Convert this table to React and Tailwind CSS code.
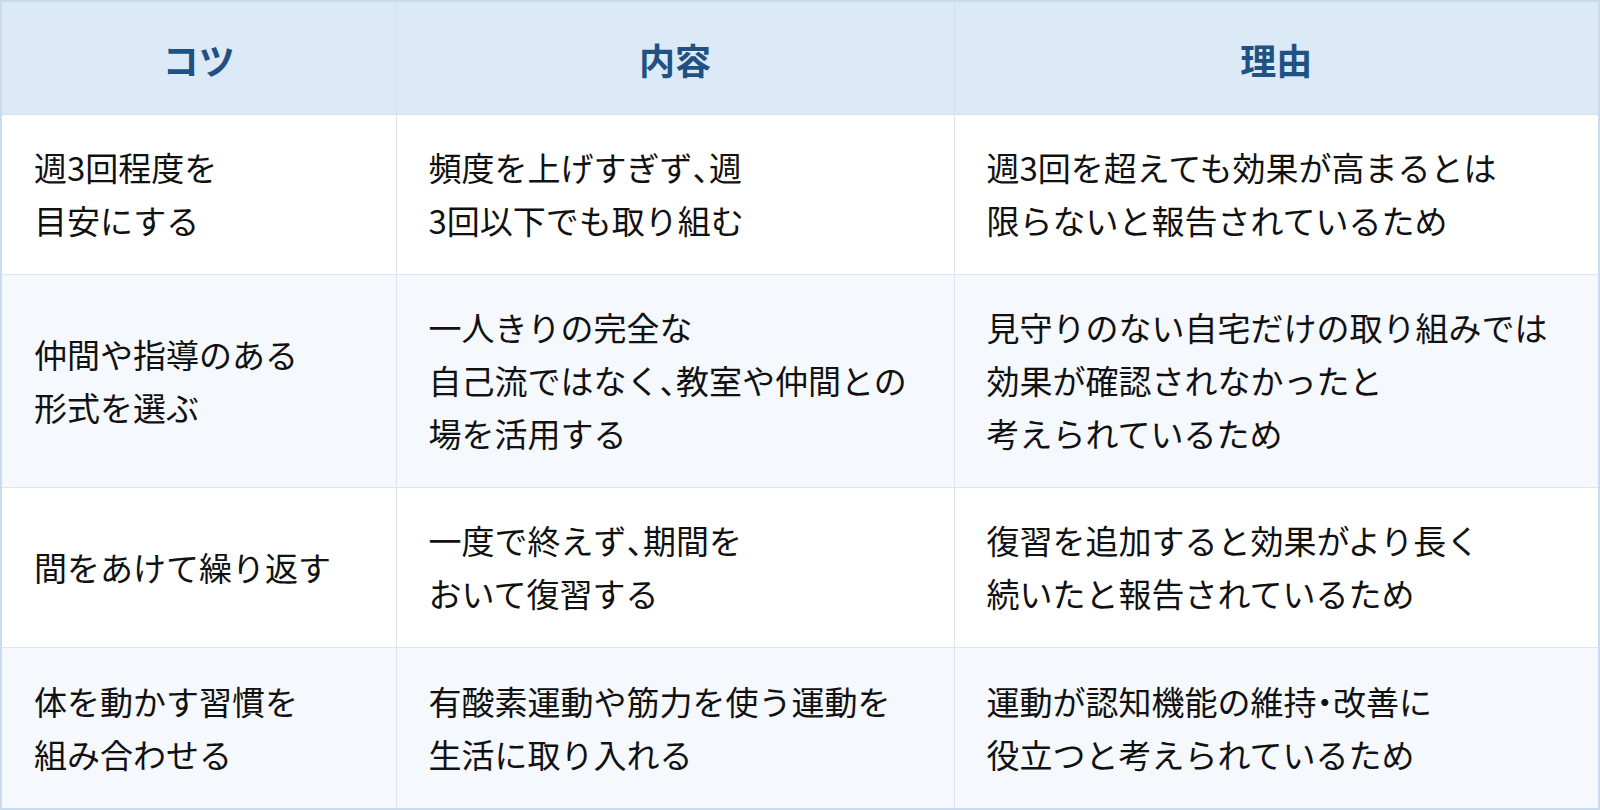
const rows = [
	{
		tip: ["週3回程度を", "目安にする"],
		content: ["頻度を上げすぎず、週", "3回以下でも取り組む"],
		reason: ["週3回を超えても効果が高まるとは", "限らないと報告されているため"],
	},
	{
		tip: ["仲間や指導のある", "形式を選ぶ"],
		content: ["一人きりの完全な", "自己流ではなく、教室や仲間との", "場を活用する"],
		reason: ["見守りのない自宅だけの取り組みでは", "効果が確認されなかったと", "考えられているため"],
	},
	{
		tip: ["間をあけて繰り返す"],
		content: ["一度で終えず、期間を", "おいて復習する"],
		reason: ["復習を追加すると効果がより長く", "続いたと報告されているため"],
	},
	{
		tip: ["体を動かす習慣を", "組み合わせる"],
		content: ["有酸素運動や筋力を使う運動を", "生活に取り入れる"],
		reason: ["運動が認知機能の維持・改善に", "役立つと考えられているため"],
	},
]

// punctuation in the reference is set half-width
const Line = ({ text }) => {
	const parts = text.split(/([、・])/)
	return (
		<span className="block">
			{parts.map((p, i) =>
				p === "、" || p === "・" ? (
					<span key={i} className="[font-feature-settings:'halt']">
						{p}
					</span>
				) : (
					p
				)
			)}
		</span>
	)
}

const Lines = ({ lines }) => lines.map((l, i) => <Line key={i} text={l} />)

const cell = "border border-[#dde6ef] px-8 py-[26.5px] text-[33px] font-normal leading-[53px] text-[#111] align-middle"
const lastCell = "border border-[#dde6ef] px-8 pt-[27.5px] pb-[26.5px] text-[33px] font-normal leading-[53px] text-[#111] align-middle"
const head = "h-[113px] border border-[#d3e1ee] pt-[3px] text-[36px] font-bold text-[#1f5283] text-center align-middle"

const App = () => {
	return (
		<div
			className="w-[1600px] h-[810px] bg-white"
			style={{ fontFamily: '"Noto Sans CJK JP", "Noto Sans", sans-serif' }}
		>
			<table className="w-full table-fixed border-collapse border-2 border-[#c9dcef]">
				<colgroup>
					<col className="w-[395px]" />
					<col className="w-[558px]" />
					<col />
				</colgroup>
				<thead>
					<tr className="bg-[#dce9f6]">
						<th className={head}>コツ</th>
						<th className={head}>内容</th>
						<th className={head}>理由</th>
					</tr>
				</thead>
				<tbody>
					{rows.map((r, i) => {
						const c = i === rows.length - 1 ? lastCell : cell
						return (
							<tr key={i} className={i % 2 === 0 ? "bg-white" : "bg-[#f5f8fc]"}>
								<td className={c}>
									<Lines lines={r.tip} />
								</td>
								<td className={c}>
									<Lines lines={r.content} />
								</td>
								<td className={c}>
									<Lines lines={r.reason} />
								</td>
							</tr>
						)
					})}
				</tbody>
			</table>
		</div>
	)
}

export default App
